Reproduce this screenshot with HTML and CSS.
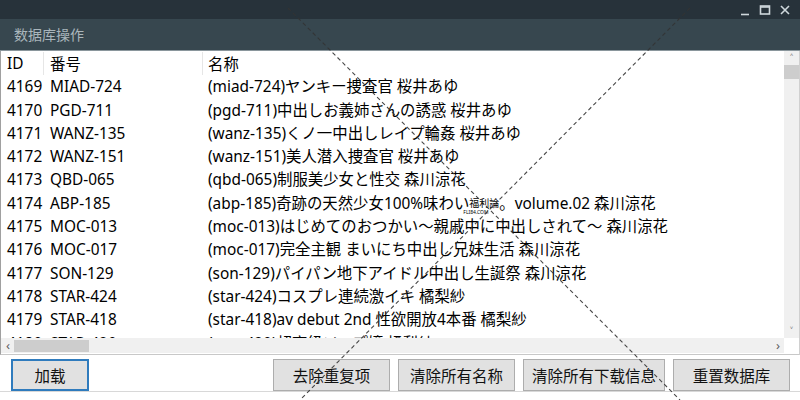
FILE: index.html
```html
<!DOCTYPE html>
<html lang="zh-CN">
<head>
    <meta charset="UTF-8">
    <title>数据库操作</title>
    <link rel="stylesheet" href="styles.css">
</head>
<body>
    <!-- 标题栏 -->
    <div class="titlebar">
        <div class="win-btns">
            <svg width="12" height="12" viewBox="0 0 12 12"><path d="M2 10.5h8" stroke="#cfd8dc" stroke-width="1.6"/></svg>
            <svg width="12" height="12" viewBox="0 0 12 12"><rect x="1.5" y="2" width="9" height="8" fill="none" stroke="#cfd8dc" stroke-width="1.6"/><path d="M1.5 3h9" stroke="#cfd8dc" stroke-width="1.6"/></svg>
            <svg width="12" height="12" viewBox="0 0 12 12"><path d="M2 2l8 8M10 2l-8 8" stroke="#cfd8dc" stroke-width="1.6"/></svg>
        </div>
    </div>
    <div class="caption">数据库操作</div>

    <!-- 列表 -->
    <div class="grid">
        <div class="grid-body">
            <div class="rows">
                <div class="row head">
                    <div class="c-id">ID</div>
                    <div class="c-no">番号</div>
                    <div class="c-name">名称</div>
                </div>
                <div class="row"><div class="c-id">4169</div><div class="c-no">MIAD-724</div><div class="c-name">(miad-724)ヤンキー捜査官 桜井あゆ</div></div>
                <div class="row"><div class="c-id">4170</div><div class="c-no">PGD-711</div><div class="c-name">(pgd-711)中出しお義姉さんの誘惑 桜井あゆ</div></div>
                <div class="row"><div class="c-id">4171</div><div class="c-no">WANZ-135</div><div class="c-name">(wanz-135)くノ一中出しレイプ輪姦 桜井あゆ</div></div>
                <div class="row"><div class="c-id">4172</div><div class="c-no">WANZ-151</div><div class="c-name">(wanz-151)美人潜入捜査官 桜井あゆ</div></div>
                <div class="row"><div class="c-id">4173</div><div class="c-no">QBD-065</div><div class="c-name">(qbd-065)制服美少女と性交 森川涼花</div></div>
                <div class="row"><div class="c-id">4174</div><div class="c-no">ABP-185</div><div class="c-name">(abp-185)奇跡の天然少女100%味わい<span class="mark">福利論<small>FLI84.COM</small></span>。volume.02 森川涼花</div></div>
                <div class="row"><div class="c-id">4175</div><div class="c-no">MOC-013</div><div class="c-name">(moc-013)はじめてのおつかい～親戚中に中出しされて～ 森川涼花</div></div>
                <div class="row"><div class="c-id">4176</div><div class="c-no">MOC-017</div><div class="c-name">(moc-017)完全主観 まいにち中出し兄妹生活 森川涼花</div></div>
                <div class="row"><div class="c-id">4177</div><div class="c-no">SON-129</div><div class="c-name">(son-129)パイパン地下アイドル中出し生誕祭 森川涼花</div></div>
                <div class="row"><div class="c-id">4178</div><div class="c-no">STAR-424</div><div class="c-name">(star-424)コスプレ連続激イキ 橘梨紗</div></div>
                <div class="row"><div class="c-id">4179</div><div class="c-no">STAR-418</div><div class="c-name">(star-418)av debut 2nd 性欲開放4本番 橘梨紗</div></div>
                <div class="row"><div class="c-id">4180</div><div class="c-no">STAR-420</div><div class="c-name">(star-420)超高級ソープ嬢 橘梨紗</div></div>
            </div>
            <div class="vscroll">
                <span class="arrow">&#708;</span>
                <div class="vthumb"></div>
                <div class="vtrack"></div>
                <span class="arrow">&#709;</span>
            </div>
        </div>
        <div class="hscroll">
            <span class="arrow">&lsaquo;</span>
            <div class="hthumb"></div>
            <div class="htrack"></div>
            <span class="arrow">&rsaquo;</span>
        </div>
    </div>

    <!-- 按钮 -->
    <div class="actions">
        <button class="primary">加载</button>
        <div class="spacer"></div>
        <button class="w117">去除重复项</button>
        <button class="w117">清除所有名称</button>
        <button class="w141">清除所有下载信息</button>
        <button class="w117">重置数据库</button>
    </div>

    <!-- 水印线 -->
    <svg class="watermark" width="800" height="400" viewBox="0 0 800 400">
        <path d="M288 8L680 400M690 8L300 400" stroke="#333" stroke-width="1.1" stroke-dasharray="4 3" fill="none" opacity="0.9"/>
    </svg>
</body>
</html>
```

FILE: styles.css
```css
/* 基础样式 */
body {
    margin: 0;
    width: 800px;
    height: 400px;
    overflow: hidden;
    background: #fff;
    font-family: "Noto Sans", "Noto Sans CJK JP", sans-serif;
    position: relative;
}

/* 标题栏 */
.titlebar {
    height: 19px;
    background: #27323a;
    display: flex;
    justify-content: flex-end;
}

.win-btns {
    display: flex;
    gap: 8px;
    padding: 4px 9px 0 0;
}

.caption {
    height: 31px;
    background: #37474f;
    color: #aab6bc;
    font-family: "Noto Sans CJK SC", sans-serif;
    font-size: 14px;
    line-height: 30px;
    padding-left: 14px;
    border-bottom: 1px solid #8a969c;
}

/* 列表 */
.grid {
    border-left: 1px solid #a0a0a0;
    border-right: 1px solid #d0d0d0;
    border-bottom: 1px solid #c8c8c8;
    height: 303px;
    display: flex;
    flex-direction: column;
}

.grid-body {
    display: flex;
    height: 287px;
}

.rows {
    flex: 1;
    overflow: hidden;
    padding-top: 1px;
}

.row {
    display: flex;
    height: 23.3px;
    line-height: 23px;
    font-size: 15.4px;
    color: #000;
    white-space: nowrap;
}

.c-id {
    width: 43px;
    padding-left: 6px;
    box-sizing: border-box;
}

.c-no {
    width: 159px;
    padding-left: 6px;
    box-sizing: border-box;
}

.c-name {
    padding-left: 5px;
}

.row.head .c-id,
.row.head .c-no {
    border-right: 1px solid #e6e6e6;
}

.row.head .c-no,
.row.head .c-name {
    font-family: "Noto Sans CJK SC", sans-serif;
}

.mark {
    font-size: 10px;
    position: relative;
    display: inline-block;
    line-height: 14px;
    vertical-align: 2px;
}

.mark small {
    position: absolute;
    left: -6px;
    top: 13px;
    font-size: 5px;
    line-height: 6px;
}

/* 滚动条 */
.vscroll {
    width: 15px;
    background: #f0f0f0;
    display: flex;
    flex-direction: column;
    align-items: center;
}

.vscroll .arrow {
    height: 14px;
    line-height: 14px;
    font-size: 11px;
    color: #606060;
}

.vthumb {
    width: 15px;
    height: 14px;
    background: #cdcdcd;
}

.vtrack {
    flex: 1;
}

.hscroll {
    height: 15px;
    background: #f0f0f0;
    display: flex;
    align-items: center;
    margin-right: 15px;
    padding: 0 4px 0 5px;
}

.hscroll .arrow {
    font-size: 13px;
    color: #606060;
    line-height: 15px;
}

.hthumb {
    width: 75px;
    height: 12px;
    margin-left: 4px;
    background: #cdcdcd;
}

.htrack {
    flex: 1;
}

/* 按钮样式 */
.actions {
    display: flex;
    gap: 8px;
    padding: 4px 10px 0 11px;
    height: 37px;
    box-sizing: border-box;
    border-bottom: 1px solid #d8d8d8;
}

.spacer {
    flex: 1;
}

button {
    height: 32px;
    background: #e1e1e1;
    border: 1px solid #adadad;
    font-family: "Noto Sans CJK SC", sans-serif;
    font-size: 15.5px;
    color: #111;
    padding: 0;
}

button.primary {
    width: 78px;
    border: 1px solid #2f7bbd;
    box-shadow: inset 0 0 0 1px #2f7bbd;
}

.w117 {
    width: 117px;
}

.w141 {
    width: 142px;
}

.watermark {
    position: absolute;
    left: 0;
    top: 0;
    pointer-events: none;
}
```
